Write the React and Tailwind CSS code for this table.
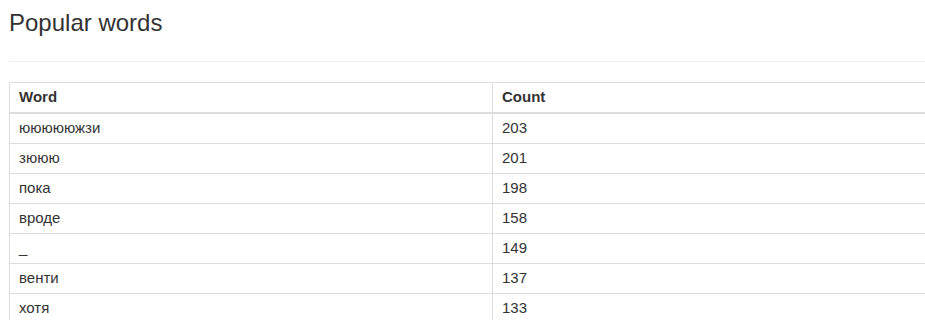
const rows = [
  ["юююююжзи", 203],
  ["зююю", 201],
  ["пока", 198],
  ["вроде", 158],
  ["_", 149],
  ["венти", 137],
  ["хотя", 133],
];

function Row({ word, count, head }) {
  return (
    <div
      className={`flex ${
        head ? "border-b-2" : "border-b"
      } border-[#ddd] ${head ? "font-bold" : ""}`}
    >
      <div className="w-[483px] h-[29px] px-[9px] pb-[1px] flex items-center border-r border-[#ddd] shrink-0">
        {word}
      </div>
      <div className="flex-1 h-[29px] px-[9px] pb-[1px] flex items-center">{count}</div>
    </div>
  );
}

export default function App() {
  return (
    <div
      className="w-[925px] h-[320px] overflow-hidden bg-white text-[#333] text-[15px] leading-[20px]"
      style={{ fontFamily: '"Liberation Sans", Arial, sans-serif' }}
    >
      <div className="pl-[9px]">
        {/* Title */}
        <div className="h-[62px] pt-[10px] border-b border-[#eee]">
          <h3 className="text-[24px] leading-[26.4px] font-normal">Popular words</h3>
        </div>

        {/* Table */}
        <div className="mt-[20px] w-[1000px] border border-[#ddd]">
          <Row word="Word" count="Count" head />
          {rows.map(([w, c], i) => (
            <Row key={i} word={w} count={c} />
          ))}
        </div>
      </div>
    </div>
  );
}
